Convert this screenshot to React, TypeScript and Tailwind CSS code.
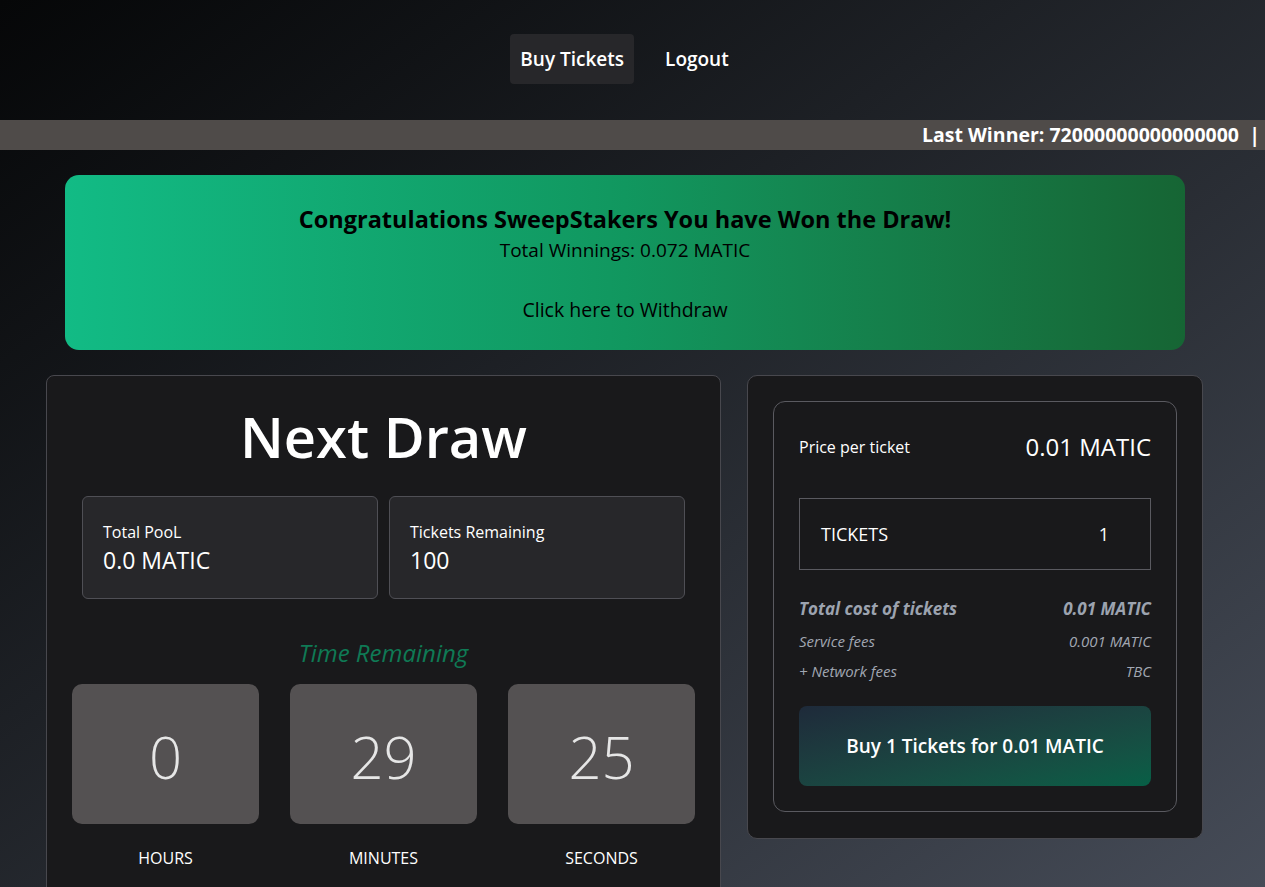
import React from "react";

const font = { fontFamily: '"Segoe UI", "Open Sans", "Noto Sans", sans-serif' };

function StatBox({ label, value }: { label: string; value: string }) {
  return (
    <div className="flex h-[103px] flex-1 flex-col justify-center rounded-md border border-[#4f4f55] bg-[#27272a] px-5">
      <span className="text-[16px] leading-6 text-white">{label}</span>
      <span className="text-[23px] leading-8 text-white">{value}</span>
    </div>
  );
}

function TimeBox({ value, label }: { value: string; label: string }) {
  return (
    <div className="flex w-[187px] flex-col items-center">
      <div className="flex h-[140px] w-full items-center justify-center rounded-[10px] bg-[#545152] pt-[6px]">
        <span className="text-[58px] font-light leading-none text-[#e6e6e6]">{value}</span>
      </div>
      <span className="mt-[22px] text-[16px] leading-6 text-white">{label}</span>
    </div>
  );
}

function FeeRow({ left, right, big }: { left: string; right: string; big?: boolean }) {
  return (
    <div
      className={
        big
          ? "flex h-[28px] items-center justify-between text-[17px] font-bold italic text-[#9ca3af]"
          : "flex h-[30px] items-center justify-between text-[15px] font-medium italic text-[#a1a7b2]"
      }
    >
      <span>{left}</span>
      <span>{right}</span>
    </div>
  );
}

export default function App() {
  return (
    <div
      style={font}
      className="min-h-screen w-full overflow-hidden bg-linear-to-br from-[#060708] to-[#474d59]"
    >
      <nav className="flex h-[120px] items-center justify-center gap-[21px] pb-[2px] pr-[16px]">
        <button className="h-[50px] rounded-[4px] bg-[#27272a] px-[10px] text-[19px] font-semibold text-white">
          Buy Tickets
        </button>
        <button className="h-[50px] px-[10px] text-[19px] font-semibold text-white">Logout</button>
      </nav>

      <div className="h-[30px] overflow-hidden whitespace-nowrap bg-[#4f4b49] pl-[922px] text-[19.5px] font-bold leading-[30px] text-white">
        Last Winner: 72000000000000000&nbsp; |
      </div>

      <section className="mx-[65px] mt-[25px] mr-[80px] flex h-[175px] flex-col items-center rounded-[14px] bg-linear-to-r from-[#12bb85] via-[#11975f] to-[#166534] pt-[28px] text-black">
        <h2 className="text-[23.5px] font-bold leading-8">Congratulations SweepStakers You have Won the Draw!</h2>
        <p className="text-[19px] leading-[30px]">Total Winnings: 0.072 MATIC</p>
        <button className="mt-[33px] text-[19.5px] font-medium leading-6">Click here to Withdraw</button>
      </section>

      <div className="mt-[25px] flex items-start gap-[26px] pl-[46px]">
        <div className="flex h-[540px] w-[675px] flex-col items-center rounded-[8px] border border-[#48484e] bg-[#19191b] px-[35px] pt-[22px]">
          <h1 className="text-[56px] font-semibold leading-[76px] text-white">Next Draw</h1>
          <div className="mt-[22px] flex w-full gap-[11px]">
            <StatBox label="Total PooL" value="0.0 MATIC" />
            <StatBox label="Tickets Remaining" value="100" />
          </div>
          <p className="mt-[38px] text-[24px] italic leading-8 text-[#0f7a55]">Time Remaining</p>
          <div className="mt-[15px] flex w-[623px] justify-between">
            <TimeBox value="0" label="HOURS" />
            <TimeBox value="29" label="MINUTES" />
            <TimeBox value="25" label="SECONDS" />
          </div>
        </div>

        <div className="w-[456px] rounded-[10px] border border-[#48484e] bg-[#19191b] px-[25px] pb-[26px] pt-[25px]">
          <div className="rounded-[12px] border border-[#5a5a60] px-[25px] pb-[25px] pt-[29px]">
            <div className="flex items-center justify-between text-white">
              <span className="text-[16px] leading-6">Price per ticket</span>
              <span className="text-[24px] leading-8">0.01 MATIC</span>
            </div>
            <div className="mt-[35px] flex h-[72px] items-center justify-between border border-[#5a5a60] pl-[21px] pr-[41px] text-[18px] text-white">
              <span>TICKETS</span>
              <span>1</span>
            </div>
            <div className="mt-[25px]">
              <FeeRow big left="Total cost of tickets" right="0.01 MATIC" />
              <div className="mt-[3px]">
                <FeeRow left="Service fees" right="0.001 MATIC" />
                <FeeRow left="+ Network fees" right="TBC" />
              </div>
            </div>
            <button className="mt-[20px] h-[80px] w-full rounded-[8px] bg-linear-to-br from-[#1e2a3a] to-[#065f46] text-[19px] font-semibold text-white">
              Buy 1 Tickets for 0.01 MATIC
            </button>
          </div>
        </div>
      </div>
    </div>
  );
}
